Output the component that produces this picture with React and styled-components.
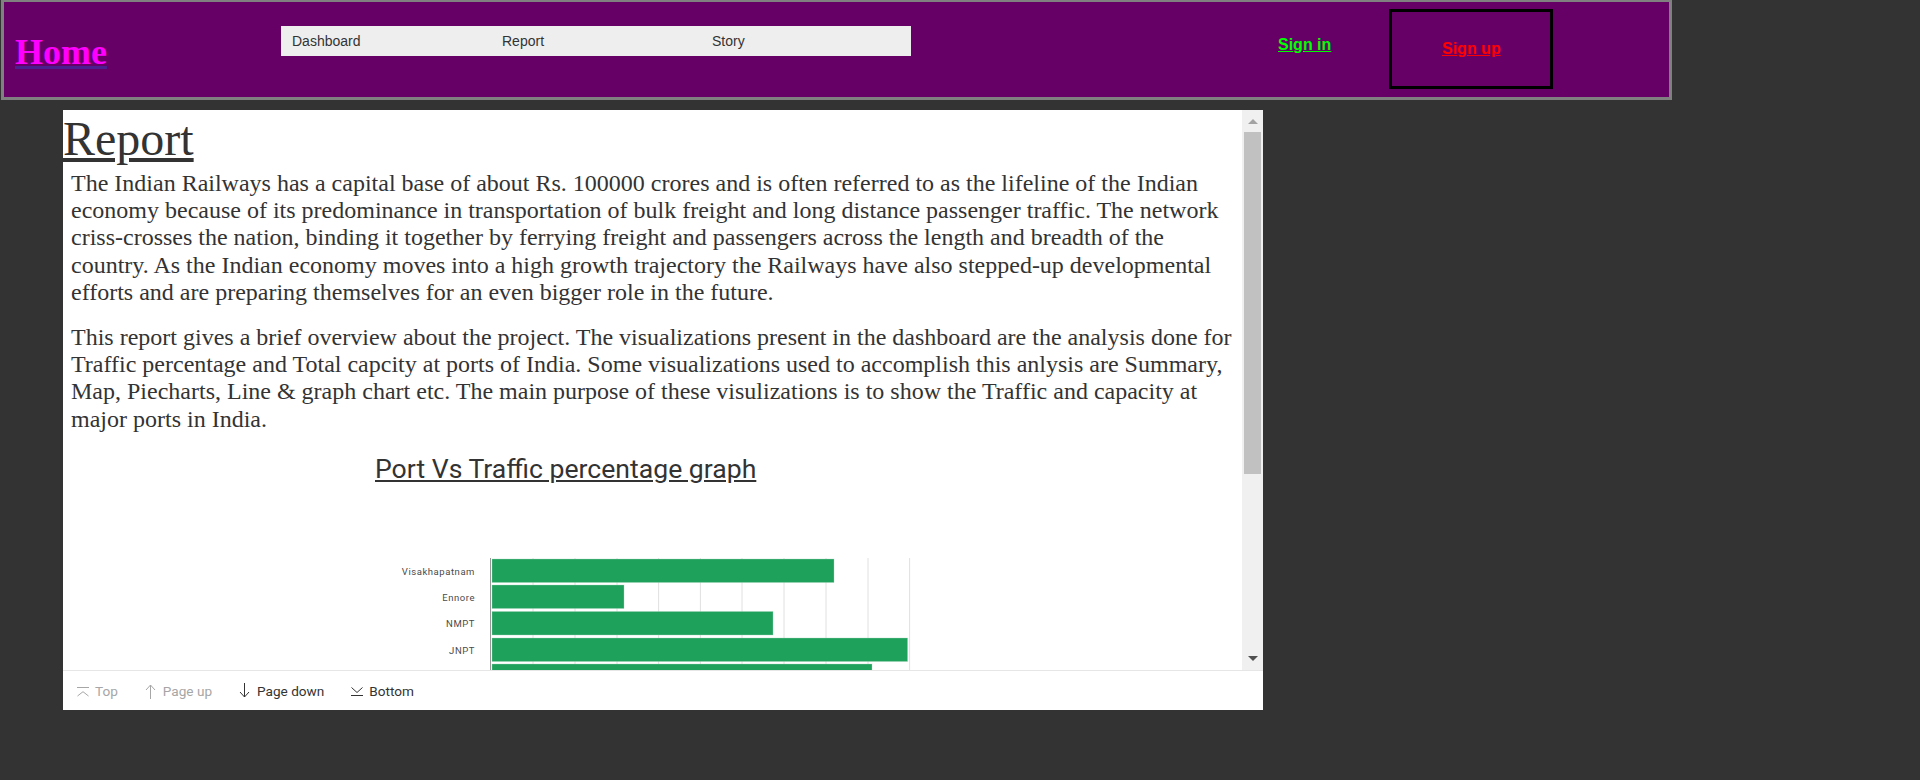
import React from "react";
import styled, { createGlobalStyle } from "styled-components";

const Global = createGlobalStyle`
  html, body { margin: 0; padding: 0; background: #333333; }
  body { height: 780px; overflow: hidden; font-family: "Liberation Serif", serif; color: #333; }
`;

const Header = styled.header`
  box-sizing: border-box;
  margin-left: 1px;
  width: 1671px;
  height: 100px;
  background: #660066;
  border: 3px solid #808080;
  border-top-width: 2px;
  display: flex;
  align-items: flex-start;
`;
const Brand = styled.a`
  width: 277px;
  box-sizing: border-box;
  padding: 29px 0 0 11px;
  font: bold 36px "Liberation Serif", serif;
  color: #ff00ff;
  text-decoration: underline;
  text-decoration-color: #4b1f8f;
`;
const Nav = styled.nav`
  margin-top: 24px;
  width: 630px;
  height: 30px;
  background: #eeeeee;
  display: flex;
`;
const NavItem = styled.a`
  width: 210px;
  box-sizing: border-box;
  padding-left: 11px;
  font: 14px/30px "Liberation Sans", sans-serif;
  color: #333;
`;
const SignIn = styled.a`
  margin: 34px 0 0 367px;
  font: bold 16px "Liberation Sans", sans-serif;
  color: #00ff00;
  text-decoration: underline;
`;
const SignUpBox = styled.div`
  box-sizing: border-box;
  margin: 7px 0 0 58px;
  width: 164px;
  height: 80px;
  border: 3px solid #000;
  display: flex;
  align-items: center;
  justify-content: center;
`;
const SignUp = styled.a`
  font: bold 16px "Liberation Sans", sans-serif;
  color: #ff0000;
  text-decoration: underline;
`;

const Panel = styled.section`
  margin: 10px 0 0 63px;
  width: 1200px;
  height: 600px;
  background: #fff;
  display: flex;
  flex-direction: column;
`;
const ScrollRow = styled.div`
  flex: 1;
  min-height: 0;
  display: flex;
`;
const Content = styled.div`
  flex: 1;
  min-width: 0;
  overflow: hidden;
`;
const Title = styled.h1`
  margin: 0;
  font: 48px/57px "Liberation Serif", serif;
  text-decoration: underline;
  color: #333;
`;
const Para = styled.p`
  margin: 3px 8px 18px;
  font: 24px/27.2px "Liberation Serif", serif;
  color: #333;
`;
const ChartTitle = styled.h2`
  margin: 0 0 0 312px;
  padding-top: 2px;
  font: 400 26.6px/32px "Roboto", sans-serif;
  text-decoration: underline;
  color: #333;
`;
const Chart = styled.svg`
  display: block;
  margin: 73px 0 0 300px;
`;
const Track = styled.div`
  width: 21px;
  background: #f0f0f0;
  display: flex;
  flex-direction: column;
  align-items: center;
`;
const UpArrow = styled.div`
  margin-top: 9px;
  width: 0;
  height: 0;
  border-left: 5px solid transparent;
  border-right: 5px solid transparent;
  border-bottom: 5px solid #a3a3a3;
`;
const Thumb = styled.div`
  margin-top: 8px;
  width: 17px;
  height: 342px;
  background: #c1c1c1;
`;
const DownArrow = styled.div`
  margin-top: auto;
  margin-bottom: 9px;
  width: 0;
  height: 0;
  border-left: 5px solid transparent;
  border-right: 5px solid transparent;
  border-top: 5px solid #505050;
`;
const Footer = styled.div`
  box-sizing: border-box;
  height: 40px;
  border-top: 1px solid #e6e6e6;
  display: flex;
  align-items: center;
  padding-left: 14px;
  gap: 27px;
`;
const FootButton = styled.span`
  display: inline-flex;
  align-items: center;
  gap: 6px;
  font: 13.6px "Roboto", sans-serif;
  color: ${(p) => (p.$off ? "#a6a6a6" : "#333")};
`;

const IconSvg = ({ children }) => (
  <svg width="12" height="16" viewBox="0 0 12 16" fill="none" stroke="currentColor" strokeWidth="1">
    {children}
  </svg>
);

const bars = [
  ["Visakhapatnam", 559, 342],
  ["Ennore", 585, 132],
  ["NMPT", 611.5, 281],
  ["JNPT", 638, 415.6],
  ["", 664, 380],
];
const grid = [42, 84, 126, 167.6, 209.4, 251, 293, 335, 377, 418.6];

export default function App() {
  return (
    <>
      <Global />
      <Header>
        <Brand>Home</Brand>
        <Nav>
          <NavItem>Dashboard</NavItem>
          <NavItem>Report</NavItem>
          <NavItem>Story</NavItem>
        </Nav>
        <SignIn>Sign in</SignIn>
        <SignUpBox>
          <SignUp>Sign up</SignUp>
        </SignUpBox>
      </Header>
      <Panel>
        <ScrollRow>
          <Content>
            <Title>Report</Title>
            <Para>
              The Indian Railways has a capital base of about Rs. 100000 crores and is often referred to as the lifeline of the Indian economy because of its predominance in transportation of bulk freight and long distance passenger traffic. The network criss-crosses the nation, binding it together by ferrying freight and passengers across the length and breadth of the country. As the Indian economy moves into a high growth trajectory the Railways have also stepped-up developmental efforts and are preparing themselves for an even bigger role in the future.
            </Para>
            <Para>
              This report gives a brief overview about the project. The visualizations present in the dashboard are the analysis done for Traffic percentage and Total capcity at ports of India. Some visualizations used to accomplish this anlysis are Summary, Map, Piecharts, Line &amp; graph chart etc. The main purpose of these visulizations is to show the Traffic and capacity at major ports in India.
            </Para>
            <ChartTitle>Port Vs Traffic percentage graph</ChartTitle>
            <Chart width="640" height="130" viewBox="363 558 640 130">
              {grid.map((g) => (
                <line key={g} x1={491 + g} x2={491 + g} y1="558" y2="688" stroke="#e0e0e0" />
              ))}
              <line x1="490.5" x2="490.5" y1="558" y2="688" stroke="#999" />
              {bars.map(([name, y, w]) => (
                <g key={y}>
                  <rect x="492" y={y} width={w} height="23.5" fill="#1a9f58" fillOpacity=".98" stroke="#a5d9bd" strokeOpacity=".5" strokeWidth=".7" />
                  <text x="475" y={y + 15.5} textAnchor="end" fontSize="9.5" letterSpacing=".55" fontFamily="Roboto, sans-serif" fill="#4a4a4a">
                    {name}
                  </text>
                </g>
              ))}
            </Chart>
          </Content>
          <Track>
            <UpArrow />
            <Thumb />
            <DownArrow />
          </Track>
        </ScrollRow>
        <Footer>
          <FootButton $off>
            <IconSvg><path d="M0 4.500h12M.5 13 6 8.700l5.500 4.300" /></IconSvg>Top
          </FootButton>
          <FootButton $off>
            <IconSvg><path d="M5.500 16V2M1 7l4.500-5L10 7" /></IconSvg>Page up
          </FootButton>
          <FootButton>
            <IconSvg><path d="M5.500 0v14M1 9l4.500 5L10 9" /></IconSvg>Page down
          </FootButton>
          <FootButton>
            <IconSvg><path d="M.5 4.500 6 9.500l5.500-5M0 12.500h12" /></IconSvg>Bottom
          </FootButton>
        </Footer>
      </Panel>
    </>
  );
}
